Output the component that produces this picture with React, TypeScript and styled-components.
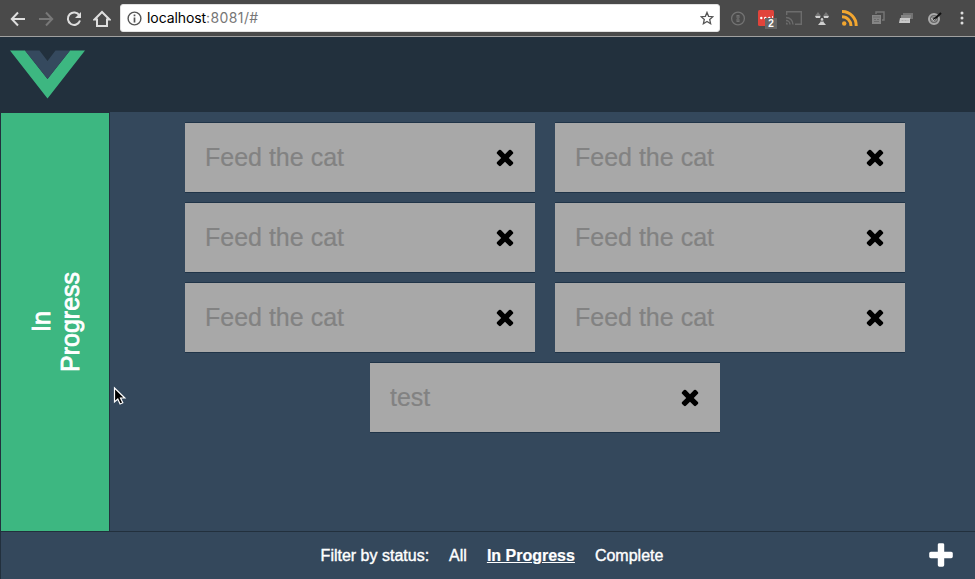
import React from "react";
import styled, { createGlobalStyle, css } from "styled-components";

const ink = "#22303d";
const slate = "#34485c";
const green = "#3db781";

const GlobalStyle = createGlobalStyle`
  * { box-sizing: border-box; }
  html, body { margin: 0; overflow: hidden; background: ${slate}; }
  body { font-family: "Liberation Sans", Arial, sans-serif; }
  svg { display: block; flex: none; }
`;

const Window = styled.div`
  display: grid;
  grid-template-columns: 975px;
  grid-template-rows: 37px 75px 419px 48px;
  width: 975px;
  height: 579px;
  position: relative;
  background: ${slate};
`;

const BrowserBar = styled.header`
  display: flex;
  align-items: center;
  padding-left: 4px;
  background: #4a4a4a;
  border-bottom: 1px solid #a0a0a0;
`;

const Navigation = styled.nav`
  display: flex;
  flex: none;
  width: 116px;
  padding-top: 1px;
`;

const NavButton = styled.span<{ $dim?: boolean }>`
  display: flex;
  align-items: center;
  justify-content: center;
  flex: none;
  width: 28px;
  color: ${(p) => (p.$dim ? "#787878" : "#dedede")};
`;

const AddressBar = styled.div`
  display: flex;
  flex: none;
  align-items: center;
  width: 600px;
  height: 28px;
  padding: 0 5px 0 6px;
  border-radius: 3px;
  border: 1px solid #e2e2e2;
  background: #fff;
  color: #555;
`;

const Url = styled.span`
  flex: 1;
  padding-left: 5px;
  font: 14px/26px Inter, sans-serif;
  letter-spacing: 0.38px;
  color: #777;
`;

const Host = styled.span`
  color: #000;
  letter-spacing: -0.08px;
`;

const Extensions = styled.div`
  display: flex;
  margin-left: 4px;
`;

const Extension = styled.span`
  display: flex;
  flex: none;
  align-items: center;
  justify-content: center;
  position: relative;
  width: 28px;
  height: 28px;
`;

const Badge = styled.span`
  position: absolute;
  left: 13px;
  top: 14px;
  width: 12px;
  height: 11px;
  background: #666;
  color: #fff;
  font: bold 10px/11px "Liberation Sans", sans-serif;
  text-align: center;
`;

const AppHeader = styled.div`
  padding: 13px 9px;
  background: ${ink};
`;

const Workspace = styled.main`
  display: grid;
  grid-template-columns: 110px 1fr;
`;

const StatusPanel = styled.aside`
  display: flex;
  align-items: center;
  justify-content: center;
  border: 1px solid ${ink};
  border-bottom: 0;
  background: ${green};
`;

const StatusTitle = styled.h1`
  margin: 0 0 1px 1px;
  height: 110px;
  writing-mode: vertical-rl;
  transform: rotate(180deg);
  text-align: center;
  font-size: 25px;
  font-weight: 400;
  line-height: 29px;
  color: #fff;
  -webkit-text-stroke: 0.8px #fff;
`;

const TaskList = styled.section`
  display: flex;
  flex-wrap: wrap;
  align-content: flex-start;
  justify-content: center;
  gap: 9px 20px;
  padding: 10px 65px 0 70px;
`;

const TaskCard = styled.article`
  display: flex;
  align-items: center;
  justify-content: space-between;
  width: 350px;
  height: 71px;
  padding: 0 17px 0 20px;
  border: solid #203448;
  border-width: 1px 0;
  background: #a8a8a8;
  font-size: 25px;
  line-height: 29px;
  color: #828282;
  -webkit-text-stroke: 0.2px #828282;
`;

const Footer = styled.footer`
  display: grid;
  grid-template-columns: 1fr auto 1fr;
  align-items: center;
  padding: 0 19px 0 27px;
  border-top: 1px solid ${ink};
  border-left: 1px solid ${ink};
  color: #fff;
`;

const Filters = styled.div`
  grid-column: 2;
  display: flex;
  gap: 20px;
  font-size: 16px;
  line-height: 18px;
`;

const FilterItem = styled.span<{ $active?: boolean }>`
  -webkit-text-stroke: 0.4px #fff;
  ${(p) =>
    p.$active &&
    css`
      font-weight: 700;
      text-decoration: underline;
      -webkit-text-stroke: 0.2px #fff;
    `}
`;

const AddButton = styled.span`
  justify-self: end;
`;

const Pointer = styled.svg`
  position: absolute;
  left: 113px;
  top: 386px;
`;

const CloseIcon = () => (
  <svg width="25" height="25" viewBox="36 32 1792 1792" fill="#000">
    <path d="M1490 1322q0 40-28 68l-136 136q-28 28-68 28t-68-28l-294-294-294 294q-28 28-68 28t-68-28l-136-136q-28-28-28-68t28-68l294-294-294-294q-28-28-28-68t28-68l136-136q28-28 68-28t68 28l294 294 294-294q28-28 68-28t68 28l136 136q28 28 28 68t-28 68l-294 294 294 294q28 28 28 68z" />
  </svg>
);

const PlusIcon = () => (
  <svg width="30" height="30" viewBox="0 0 1792 1792" fill="#fff">
    <path d="M1600 736v192q0 40-28 68t-68 28h-416v416q0 40-28 68t-68 28h-192q-40 0-68-28t-28-68v-416h-416q-40 0-68-28t-28-68v-192q0-40 28-68t68-28h416v-416q0-40 28-68t68-28h192q40 0 68 28t28 68v416h416q40 0 68 28t28 68z" />
  </svg>
);

const VueLogo = () => (
  <svg width="77" height="49" viewBox="0 0 77 49">
    <path fill={green} d="M1 .5H16L38.5 29 61 .5H76L38.5 48.5z" />
    <path fill="#35495e" d="M16 .5H30.5L38.5 11 46.500 .5H61L38.5 29z" />
  </svg>
);

const line = { fill: "none", stroke: "currentColor", strokeWidth: 2 };

const tasks = ["Feed the cat", "Feed the cat", "Feed the cat", "Feed the cat", "Feed the cat", "Feed the cat", "test"];

export default function App() {
  return (
    <>
      <GlobalStyle />
      <Window>
        <BrowserBar>
          <Navigation>
            <NavButton>
              <svg width="16" height="16" {...line}><path d="M15 8H2M8 1.500 1.800 8 8 14.500" /></svg>
            </NavButton>
            <NavButton $dim>
              <svg width="16" height="16" {...line}><path d="M1 8H14M8 1.500 14.200 8 8 14.500" /></svg>
            </NavButton>
            <NavButton>
              <svg width="16" height="16" {...line}>
                <path d="M13.400 4.500A6.200 6.200 0 1 0 14 9.500" />
                <path d="M15 1v6H9z" fill="currentColor" stroke="none" />
              </svg>
            </NavButton>
            <NavButton>
              <svg width="18" height="18" {...line}><path d="M1.500 9.500 9 2 16.500 9.500H14V16H4V9.500z" /></svg>
            </NavButton>
          </Navigation>
          <AddressBar>
            <svg width="15" height="15" fill="none" stroke="currentColor" strokeWidth="1.4">
              <circle cx="7.500" cy="7.500" r="6.400" />
              <path d="M7.500 6.500v5M7.500 3.500v1.700" strokeWidth="1.700" />
            </svg>
            <Url><Host>localhost</Host>:8081/#</Url>
            <svg width="14" height="14" viewBox="0 0 14 14" fill="none" stroke="#555" strokeWidth="1.300">
              <path d="m7 1.400 1.600 3.900 4.300.4-3.200 2.800.9 4.200L7 10.500l-3.600 2.200.9-4.200L1.100 5.700l4.300-.4z" />
            </svg>
          </AddressBar>
          <Extensions>
            <Extension>
              <svg width="16" height="16" fill="none" stroke="#737373" strokeWidth="1.300">
                <circle cx="8" cy="8.500" r="6.400" />
                <path d="M6.500 5h3v3l-.7.700.7.800v2.500h-3V9l.6-.7-.6-.8z" fill="#737373" stroke="none" />
                <path d="M8 6v5" stroke="#515151" strokeWidth=".7" />
              </svg>
            </Extension>
            <Extension>
              <svg width="16" height="16">
                <rect width="16" height="16" rx="1.500" fill="#e1443b" />
                <g fill="#fff"><circle cx="3.300" cy="8" r="1.200" /><circle cx="7.300" cy="8" r="1.200" /><circle cx="11.300" cy="8" r="1.200" /><path d="M14 6h.8v3H14z" /></g>
              </svg>
              <Badge>2</Badge>
            </Extension>
            <Extension>
              <svg width="18" height="16" fill="none" stroke="#6c6c6c" strokeWidth="1.400">
                <path d="M1.700 5V1.700h14.600v12.600H10M1 7.500a7 7 0 0 1 7 7M1 10.500a4 4 0 0 1 4 4" />
                <path d="M1 12.500a2 2 0 0 1 2 2H1z" fill="#6c6c6c" stroke="none" />
              </svg>
            </Extension>
            <Extension>
              <svg width="16" height="16">
                <path d="M1 6 4 2l3 4zM9 6l3-4 3 4z" fill="#777" />
                <path d="M1 6h5.500L6 8H2zM9.500 6H15l-1 2h-4zM4 15l2.500-3h3l2.500 3z" fill="#d0d0d0" />
                <path d="M7 10h2l1 2H6z" fill="#888" />
                <circle cx="8" cy="9.300" r="1.200" fill="#ccc" />
              </svg>
            </Extension>
            <Extension>
              <svg width="16" height="16" viewBox="0 1 16 16" fill="none" stroke="#f2a630" strokeWidth="3">
                <path d="M0 2.500A14 14 0 0 1 14.200 17M0 7.800a9 9 0 0 1 9 9.200" />
                <circle cx="2.200" cy="14.500" r="2.200" fill="#f2a630" stroke="none" />
              </svg>
            </Extension>
            <Extension>
              <svg width="14" height="14">
                <path d="M5 3V1h8v8h-2" fill="none" stroke="#777" strokeWidth="1.400" />
                <rect x="1" y="4" width="9" height="9" fill="#858585" />
                <path d="M2 6h7M3 8.500h2M6 8.500h2M3 10.500h5" stroke="#6c6c6c" />
              </svg>
            </Extension>
            <Extension>
              <svg width="14" height="14">
                <path d="M4 2h10v6h-2V4H4z" fill="#727272" />
                <path d="M2 4h10v4H2z" fill="#858585" />
                <path d="M1 7h10v5H0z" fill="#c8c8c8" />
                <path d="M2.500 9.500h7" stroke="#aaa" strokeDasharray="2 1" />
              </svg>
            </Extension>
            <Extension>
              <svg width="15" height="15">
                <circle cx="7" cy="8" r="5" fill="#666" stroke="#aaa" strokeWidth="2" />
                <circle cx="7" cy="8" r="2.500" fill="none" stroke="#999" />
                <path d="m6.500 9 7.500-7" stroke="#111" strokeWidth="2" />
                <path d="m4.500 7 2 2.500 2-1.500" fill="none" stroke="#ccc" />
              </svg>
            </Extension>
            <Extension>
              <svg width="4" height="14" fill="#dedede">
                <circle cx="2" cy="2" r="1.500" /><circle cx="2" cy="7" r="1.500" /><circle cx="2" cy="12" r="1.500" />
              </svg>
            </Extension>
          </Extensions>
        </BrowserBar>
        <AppHeader><VueLogo /></AppHeader>
        <Workspace>
          <StatusPanel><StatusTitle>In<br />Progress</StatusTitle></StatusPanel>
          <TaskList>
            {tasks.map((task, i) => (
              <TaskCard key={i}>{task}<CloseIcon /></TaskCard>
            ))}
          </TaskList>
        </Workspace>
        <Footer>
          <Filters>
            <FilterItem>Filter by status:</FilterItem>
            <FilterItem>All</FilterItem>
            <FilterItem $active>In Progress</FilterItem>
            <FilterItem>Complete</FilterItem>
          </Filters>
          <AddButton><PlusIcon /></AddButton>
        </Footer>
        <Pointer width="14" height="20" viewBox="0 0 14 20">
          <path d="M1.500 2v14l3.300-3 2.300 5 2.700-1.200-2.300-4.800h4.300z" fill="#000" stroke="#fff" strokeWidth="1.200" />
        </Pointer>
      </Window>
    </>
  );
}
